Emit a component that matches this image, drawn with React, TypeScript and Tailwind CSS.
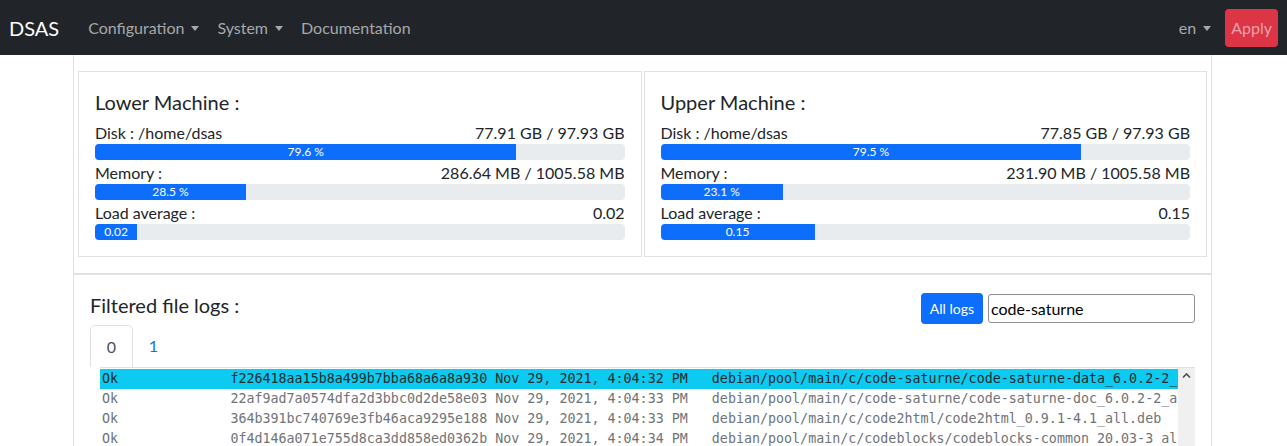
import React from 'react';

const sans = { fontFamily: 'Lato, "Open Sans", sans-serif' };

type Stat = { label: string; value: string; bar: string; width: string };

const lower: Stat[] = [
  { label: 'Disk : /home/dsas', value: '77.91 GB / 97.93 GB', bar: '79.6 %', width: '79.6%' },
  { label: 'Memory :', value: '286.64 MB / 1005.58 MB', bar: '28.5 %', width: '28.5%' },
  { label: 'Load average :', value: '0.02', bar: '0.02', width: '42px' },
];

const upper: Stat[] = [
  { label: 'Disk : /home/dsas', value: '77.85 GB / 97.93 GB', bar: '79.5 %', width: '79.5%' },
  { label: 'Memory :', value: '231.90 MB / 1005.58 MB', bar: '23.1 %', width: '23.1%' },
  { label: 'Load average :', value: '0.15', bar: '0.15', width: '154px' },
];

const logs = [
  ['f226418aa15b8a499b7bba68a6a8a930', '4:04:32', 'debian/pool/main/c/code-saturne/code-saturne-data_6.0.2-2_all.deb'],
  ['22af9ad7a0574dfa2d3bbc0d2de58e03', '4:04:33', 'debian/pool/main/c/code-saturne/code-saturne-doc_6.0.2-2_all.deb'],
  ['364b391bc740769e3fb46aca9295e188', '4:04:33', 'debian/pool/main/c/code2html/code2html_0.9.1-4.1_all.deb'],
  ['0f4d146a071e755d8ca3dd858ed0362b', '4:04:34', 'debian/pool/main/c/codeblocks/codeblocks-common_20.03-3_all.deb'],
];

const Caret = () => (
  <span className="inline-block ml-[7px] w-0 h-0 border-x-[4.5px] border-x-transparent border-t-[5px] border-t-current align-[3px]" />
);

const Machine = ({ title, stats }: { title: string; stats: Stat[] }) => (
  <div className="flex-1 border border-[#dee2e6] p-4">
    <h5 className="text-[20px] leading-[24px] mb-[6px] pt-[2px] text-[#212529]">{title}</h5>
    {stats.map(s => (
      <div key={s.label}>
        <div className="flex justify-between text-[16px] leading-[24px] pt-[1px] h-[24px] text-[#212529]">
          <span>{s.label}</span>
          <span>{s.value}</span>
        </div>
        <div className="h-4 bg-[#e9ecef] rounded overflow-hidden flex">
          <div
            className="bg-[#0d6efd] text-white text-[12px] leading-4 text-center"
            style={{ width: s.width }}
          >
            {s.bar}
          </div>
        </div>
      </div>
    ))}
  </div>
);

export default function App() {
  return (
    <div className="w-[1287px] h-[446px] overflow-hidden bg-white" style={sans}>
      {/* Navbar */}
      <nav className="h-[55px] bg-[#212529] flex items-center pl-[9px] pr-[9px]">
        <span className="text-white text-[20px] mr-[29px]">DSAS</span>
        <div className="flex items-center gap-[18px] text-[16px] text-[#a6a8a9]">
          <span>Configuration<Caret /></span>
          <span>System<Caret /></span>
          <span>Documentation</span>
        </div>
        <div className="ml-auto flex items-center">
          <span className="text-[16px] text-[#a6a8a9] mr-[14px]">en<Caret /></span>
          <button className="h-[38px] px-[6px] rounded bg-[#dc3545] text-[#f2a0a9] text-[16px]">Apply</button>
        </div>
      </nav>

      <div className="w-[1139px] ml-[73px]">
        {/* Machines */}
        <div className="border border-t-0 border-[#dee2e6] pt-[16px] pb-[16px] pl-[4px] pr-[4px] flex gap-[2px]">
          <Machine title="Lower Machine :" stats={lower} />
          <Machine title="Upper Machine :" stats={upper} />
        </div>

        {/* Logs */}
        <div className="border border-[#dee2e6] h-[200px] pl-4 pr-[16px]">
          <div className="flex items-center justify-between mt-[14px]">
            <h5 className="text-[20px] leading-[24px] text-[#212529] -mt-[4px]">Filtered file logs :</h5>
            <div className="flex items-center gap-[5px] mt-[4px]">
              <button className="h-[31px] px-[9px] rounded bg-[#0d6efd] text-white text-[14px]">All logs</button>
              <input
                readOnly
                value="code-saturne"
                className="w-[207px] h-[29px] border border-[#8f8f8f] rounded-[3px] px-[2px] text-[16px] text-black outline-none"
                style={sans}
              />
            </div>
          </div>
          <div className="flex text-[16px] mt-[1px]">
            <span className="w-[43px] h-[42px] flex items-center justify-center border border-b-0 border-[#dee2e6] rounded-t-[5px] text-[#495057]">0</span>
            <span className="w-[43px] h-[42px] flex items-center justify-center text-[#0d6efd] ml-[-1px]">1</span>
          </div>
          <div className="ml-[10px] flex border-t border-[#dee2e6]">
            <div
              className="flex-1 min-w-0 overflow-hidden whitespace-pre text-[13.33px] leading-[20px] pt-[1px]"
              style={{ fontFamily: '"DejaVu Sans Mono", monospace' }}
            >
              {logs.map((l, i) => (
                <div
                  key={l[0]}
                  className={i === 0 ? 'bg-[#0dcaf0] text-[#1f2b2e] pl-[2px]' : 'text-[#6f7478] pl-[2px]'}
                >
                  {`Ok              ${l[0]} Nov 29, 2021, ${l[1]} PM   ${l[2]}`}
                </div>
              ))}
            </div>
            <div className="w-[17px] bg-[#f0f0f0] flex justify-center pt-[4px] h-[80px]">
              <svg width="9" height="7" viewBox="0 0 9 7">
                <path d="M1 5.5 L4.5 2 L8 5.5" fill="none" stroke="#505050" strokeWidth="1.6" />
              </svg>
            </div>
          </div>
        </div>
      </div>
    </div>
  );
}
